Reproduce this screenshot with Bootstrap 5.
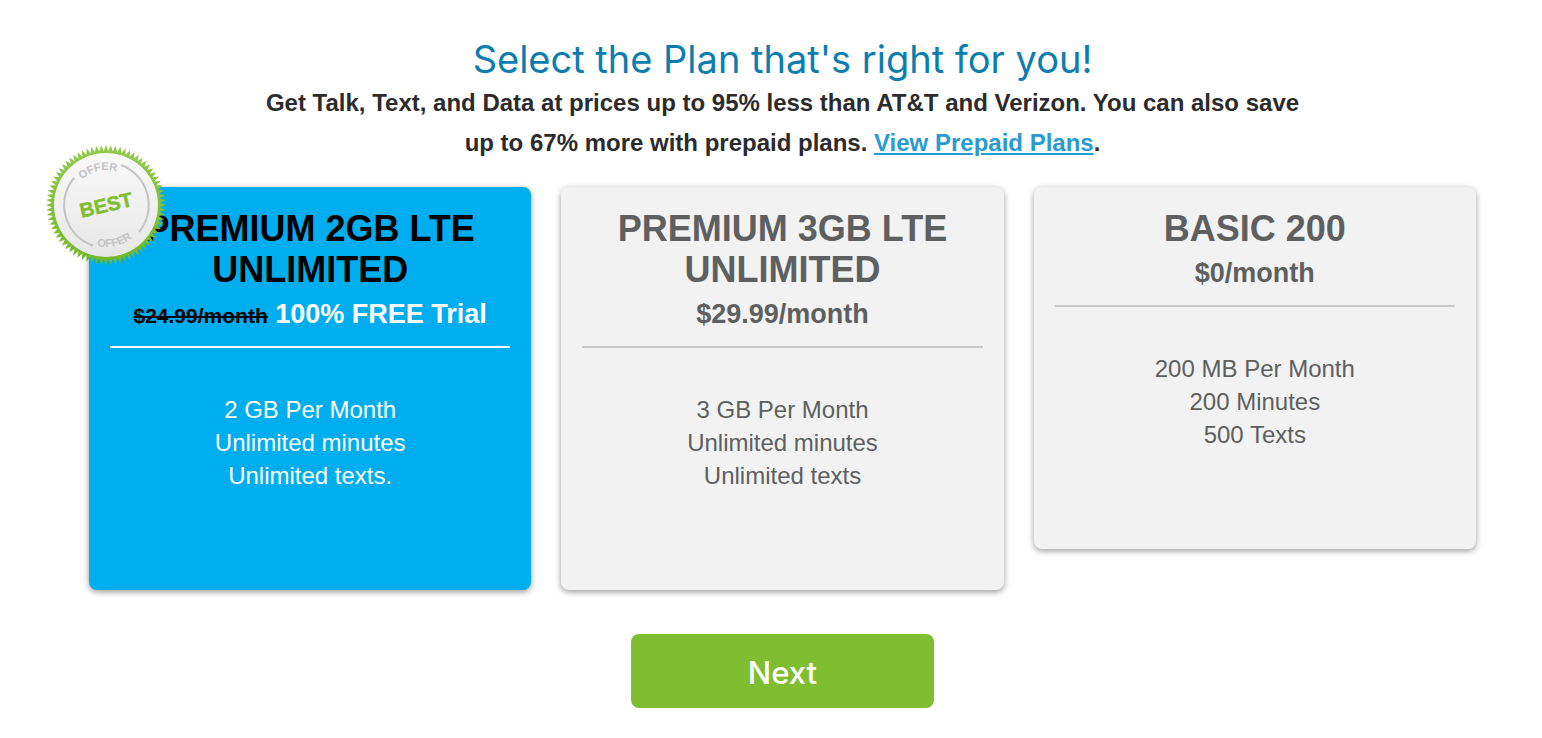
<!DOCTYPE html>
<html lang="en">
<head>
<meta charset="utf-8">
<meta name="viewport" content="width=device-width, initial-scale=1">
<title>Select a Plan</title>
<link href="https://cdn.jsdelivr.net/npm/bootstrap@5.3.0/dist/css/bootstrap.min.css" rel="stylesheet">
<style>
body { font-family: "Liberation Sans", Arial, sans-serif; color: #2b2b2b; background: #fff; }
.page { padding: 36px 66px 29px 89px; }
.headline { font: 400 38px/47px Inter, "Century Gothic", sans-serif; color: #0c7db1; }
.intro { max-width: 1040px; font-size: 24px; line-height: 40px; font-weight: 700; }
.intro a { color: #2a9bd0; }
.plans { --bs-gutter-x: 30px; }
.plan { border: 0; border-radius: 8px; background: #f2f2f2; color: #5d5f60; padding: 21px 21px 98px; box-shadow: 0 2px 6px rgba(0,0,0,.4); }
.plan h2 { font-size: 36px; line-height: 41px; font-weight: 700; }
.price { font-size: 27px; line-height: 34px; font-weight: 700; padding: 7px 0 15px; border-bottom: 2px solid #c8c8c8; }
.perks { font-size: 24px; line-height: 33px; padding-top: 45px; }
.plan.featured { background: #00aeef; color: #fff; }
.featured h2, .featured s { color: #000; }
.featured .price { border-color: #fff; }
.price s { font-size: 21px; line-height: 1; }
.seal { position: absolute; left: -43px; top: -42px; width: 120px; height: 120px; }
.btn-next { width: 303px; height: 74px; margin-top: 44px; padding-top: 10px; border: 0; border-radius: 8px; background: #7fbe31; color: #fff; font: 500 31px/44px Inter, "Century Gothic", sans-serif; }
.btn-next:hover { background: #72ad2a; color: #fff; }
</style>
</head>
<body>
<main class="page container-fluid text-center">
  <h1 class="headline mb-0">Select the Plan that's right for you!</h1>
  <p class="intro mx-auto mb-0">Get Talk, Text, and Data at prices up to 95% less than AT&amp;T and Verizon. You can also save up to 67% more with prepaid plans. <a href="#">View Prepaid Plans</a>.</p>

  <div class="plans row align-items-start pt-4">
    <div class="col-4">
      <section class="plan featured card">
        <svg class="seal" viewBox="-60 -60 120 120" role="img" aria-label="Best offer">
          <defs>
            <linearGradient id="face" x1="0" y1="0" x2="0" y2="1"><stop offset="0" stop-color="#f9f9f9"/><stop offset="1" stop-color="#e6e7e6"/></linearGradient>
            <linearGradient id="rim" x1="0" y1="0" x2="0" y2="1"><stop offset="0" stop-color="#93c94c"/><stop offset="1" stop-color="#72b82a"/></linearGradient>
            <path id="arcTop" d="M-35 0A35 35 0 0 1 35 0"/>
            <path id="arcBottom" d="M-42 0A42 42 0 0 0 42 0"/>
          </defs>
          <polygon id="teeth" fill="url(#rim)"/>
          <circle r="52" fill="url(#face)"/>
          <path d="M15 -40A42.500 42.500 0 0 1 33 27M-13 40.500A42.500 42.500 0 0 1 -32 -27" fill="none" stroke="#c3c3c6" stroke-width="2"/>
          <g transform="rotate(-13)" font-weight="700" text-anchor="middle">
            <text font-size="11" fill="#c3c3c6"><textPath href="#arcTop" startOffset="50%">OFFER</textPath></text>
            <text font-size="20" y="7" fill="#7fbe31" stroke="#7fbe31" stroke-width=".5">BEST</text>
            <text font-size="11" fill="#c3c3c6"><textPath href="#arcBottom" startOffset="50%">OFFER</textPath></text>
          </g>
        </svg>
        <h2 class="mb-0">PREMIUM 2GB LTE UNLIMITED</h2>
        <div class="price"><s>$24.99/month</s> 100% FREE Trial</div>
        <ul class="perks list-unstyled mb-0"><li>2 GB Per Month</li><li>Unlimited minutes</li><li>Unlimited texts.</li></ul>
      </section>
    </div>
    <div class="col-4">
      <section class="plan card">
        <h2 class="mb-0">PREMIUM 3GB LTE UNLIMITED</h2>
        <div class="price">$29.99/month</div>
        <ul class="perks list-unstyled mb-0"><li>3 GB Per Month</li><li>Unlimited minutes</li><li>Unlimited texts</li></ul>
      </section>
    </div>
    <div class="col-4">
      <section class="plan card">
        <h2 class="mb-0">BASIC 200</h2>
        <div class="price">$0/month</div>
        <ul class="perks list-unstyled mb-0"><li>200 MB Per Month</li><li>200 Minutes</li><li>500 Texts</li></ul>
      </section>
    </div>
  </div>

  <button type="button" class="btn btn-next">Next</button>
</main>
<script src="https://cdn.jsdelivr.net/npm/bootstrap@5.3.0/dist/js/bootstrap.bundle.min.js"></script>
<script>
// Saw-tooth edge of the seal
const count = 76, points = [];
for (let i = 0; i < count * 2; i++) {
  const r = i % 2 ? 54 : 60, a = Math.PI * i / count;
  points.push((r * Math.sin(a)).toFixed(2) + ',' + (-r * Math.cos(a)).toFixed(2));
}
document.getElementById('teeth').setAttribute('points', points.join(' '));
</script>
</body>
</html>
